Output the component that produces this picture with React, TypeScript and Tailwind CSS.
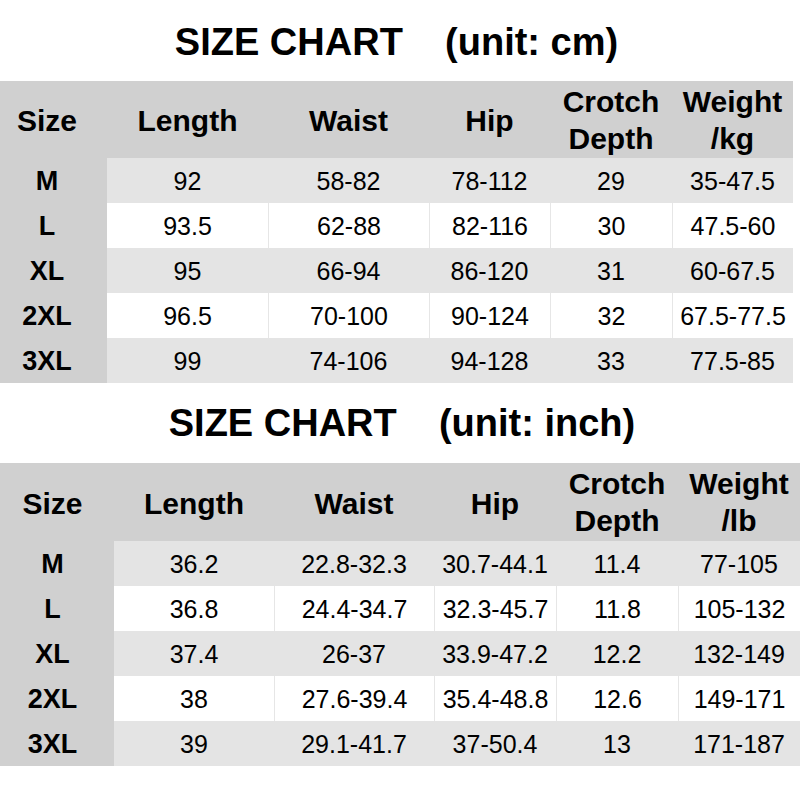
import React from "react";

type Row = { size: string; vals: string[] };

const cmRows: Row[] = [
  { size: "M", vals: ["92", "58-82", "78-112", "29", "35-47.5"] },
  { size: "L", vals: ["93.5", "62-88", "82-116", "30", "47.5-60"] },
  { size: "XL", vals: ["95", "66-94", "86-120", "31", "60-67.5"] },
  { size: "2XL", vals: ["96.5", "70-100", "90-124", "32", "67.5-77.5"] },
  { size: "3XL", vals: ["99", "74-106", "94-128", "33", "77.5-85"] },
];

const inchRows: Row[] = [
  { size: "M", vals: ["36.2", "22.8-32.3", "30.7-44.1", "11.4", "77-105"] },
  { size: "L", vals: ["36.8", "24.4-34.7", "32.3-45.7", "11.8", "105-132"] },
  { size: "XL", vals: ["37.4", "26-37", "33.9-47.2", "12.2", "132-149"] },
  { size: "2XL", vals: ["38", "27.6-39.4", "35.4-48.8", "12.6", "149-171"] },
  { size: "3XL", vals: ["39", "29.1-41.7", "37-50.4", "13", "171-187"] },
];

function Table({
  rows,
  unit,
  cols,
  width,
  sizePad,
  headerH,
}: {
  rows: Row[];
  unit: string;
  cols: string;
  width: string;
  sizePad: string;
  headerH: string;
}) {
  return (
    <div className={`grid ${cols} ${width}`}>
      <div className={`${headerH} bg-[#d0d0d0] flex items-center justify-center font-bold text-[30px] pt-[2px] ${sizePad}`}>
        Size
      </div>
      <div className={`${headerH} bg-[#d0d0d0] flex items-center justify-center font-bold text-[30px] pt-[2px]`}>Length</div>
      <div className={`${headerH} bg-[#d0d0d0] flex items-center justify-center font-bold text-[30px] pt-[2px]`}>Waist</div>
      <div className={`${headerH} bg-[#d0d0d0] flex items-center justify-center font-bold text-[30px] pt-[2px]`}>Hip</div>
      <div className={`${headerH} bg-[#d0d0d0] flex flex-col items-center justify-center font-bold text-[30px] leading-[37px]`}>
        <span>Crotch</span>
        <span>Depth</span>
      </div>
      <div className={`${headerH} bg-[#d0d0d0] flex flex-col items-center justify-center font-bold text-[30px] leading-[37px]`}>
        <span>Weight</span>
        <span>{unit}</span>
      </div>
      {rows.map((r, i) => {
        const gray = i % 2 === 0;
        return (
          <React.Fragment key={r.size}>
            <div className={`h-[45px] bg-[#d0d0d0] flex items-center justify-center font-bold text-[27px] pt-[2px] ${sizePad}`}>
              {r.size}
            </div>
            {r.vals.map((v, j) => (
              <div
                key={j}
                className={`h-[45px] flex items-center justify-center text-[25px] pt-[3px] ${
                  gray ? "bg-[#e4e4e4]" : "bg-white"
                } ${j > 0 && !gray ? "border-l border-[#e6e6e6]" : ""}`}
              >
                {v}
              </div>
            ))}
          </React.Fragment>
        );
      })}
    </div>
  );
}

export default function App() {
  return (
    <div
      className="w-[800px] h-[800px] bg-white text-black overflow-hidden"
      style={{ fontFamily: '"Liberation Sans", Arial, sans-serif' }}
    >
      <div className="h-[81px] w-[793px] flex items-center justify-center pt-[3px]">
        <h1 className="font-bold text-[38px] leading-none whitespace-pre">SIZE CHART    (unit: cm)</h1>
      </div>
      <Table
        rows={cmRows}
        unit="/kg"
        cols="grid-cols-[107px_161px_161px_121px_122px_121px]"
        width="w-[793px]"
        sizePad="pr-[13px]"
        headerH="h-[77px]"
      />
      <div className="h-[80px] w-[800px] flex items-center justify-center pl-[4px]">
        <h1 className="font-bold text-[38px] leading-none whitespace-pre">SIZE CHART    (unit: inch)</h1>
      </div>
      <Table
        rows={inchRows}
        unit="/lb"
        cols="grid-cols-[114px_160px_160px_122px_122px_122px]"
        width="w-[800px]"
        sizePad="pr-[9px]"
        headerH="h-[78px]"
      />
    </div>
  );
}
